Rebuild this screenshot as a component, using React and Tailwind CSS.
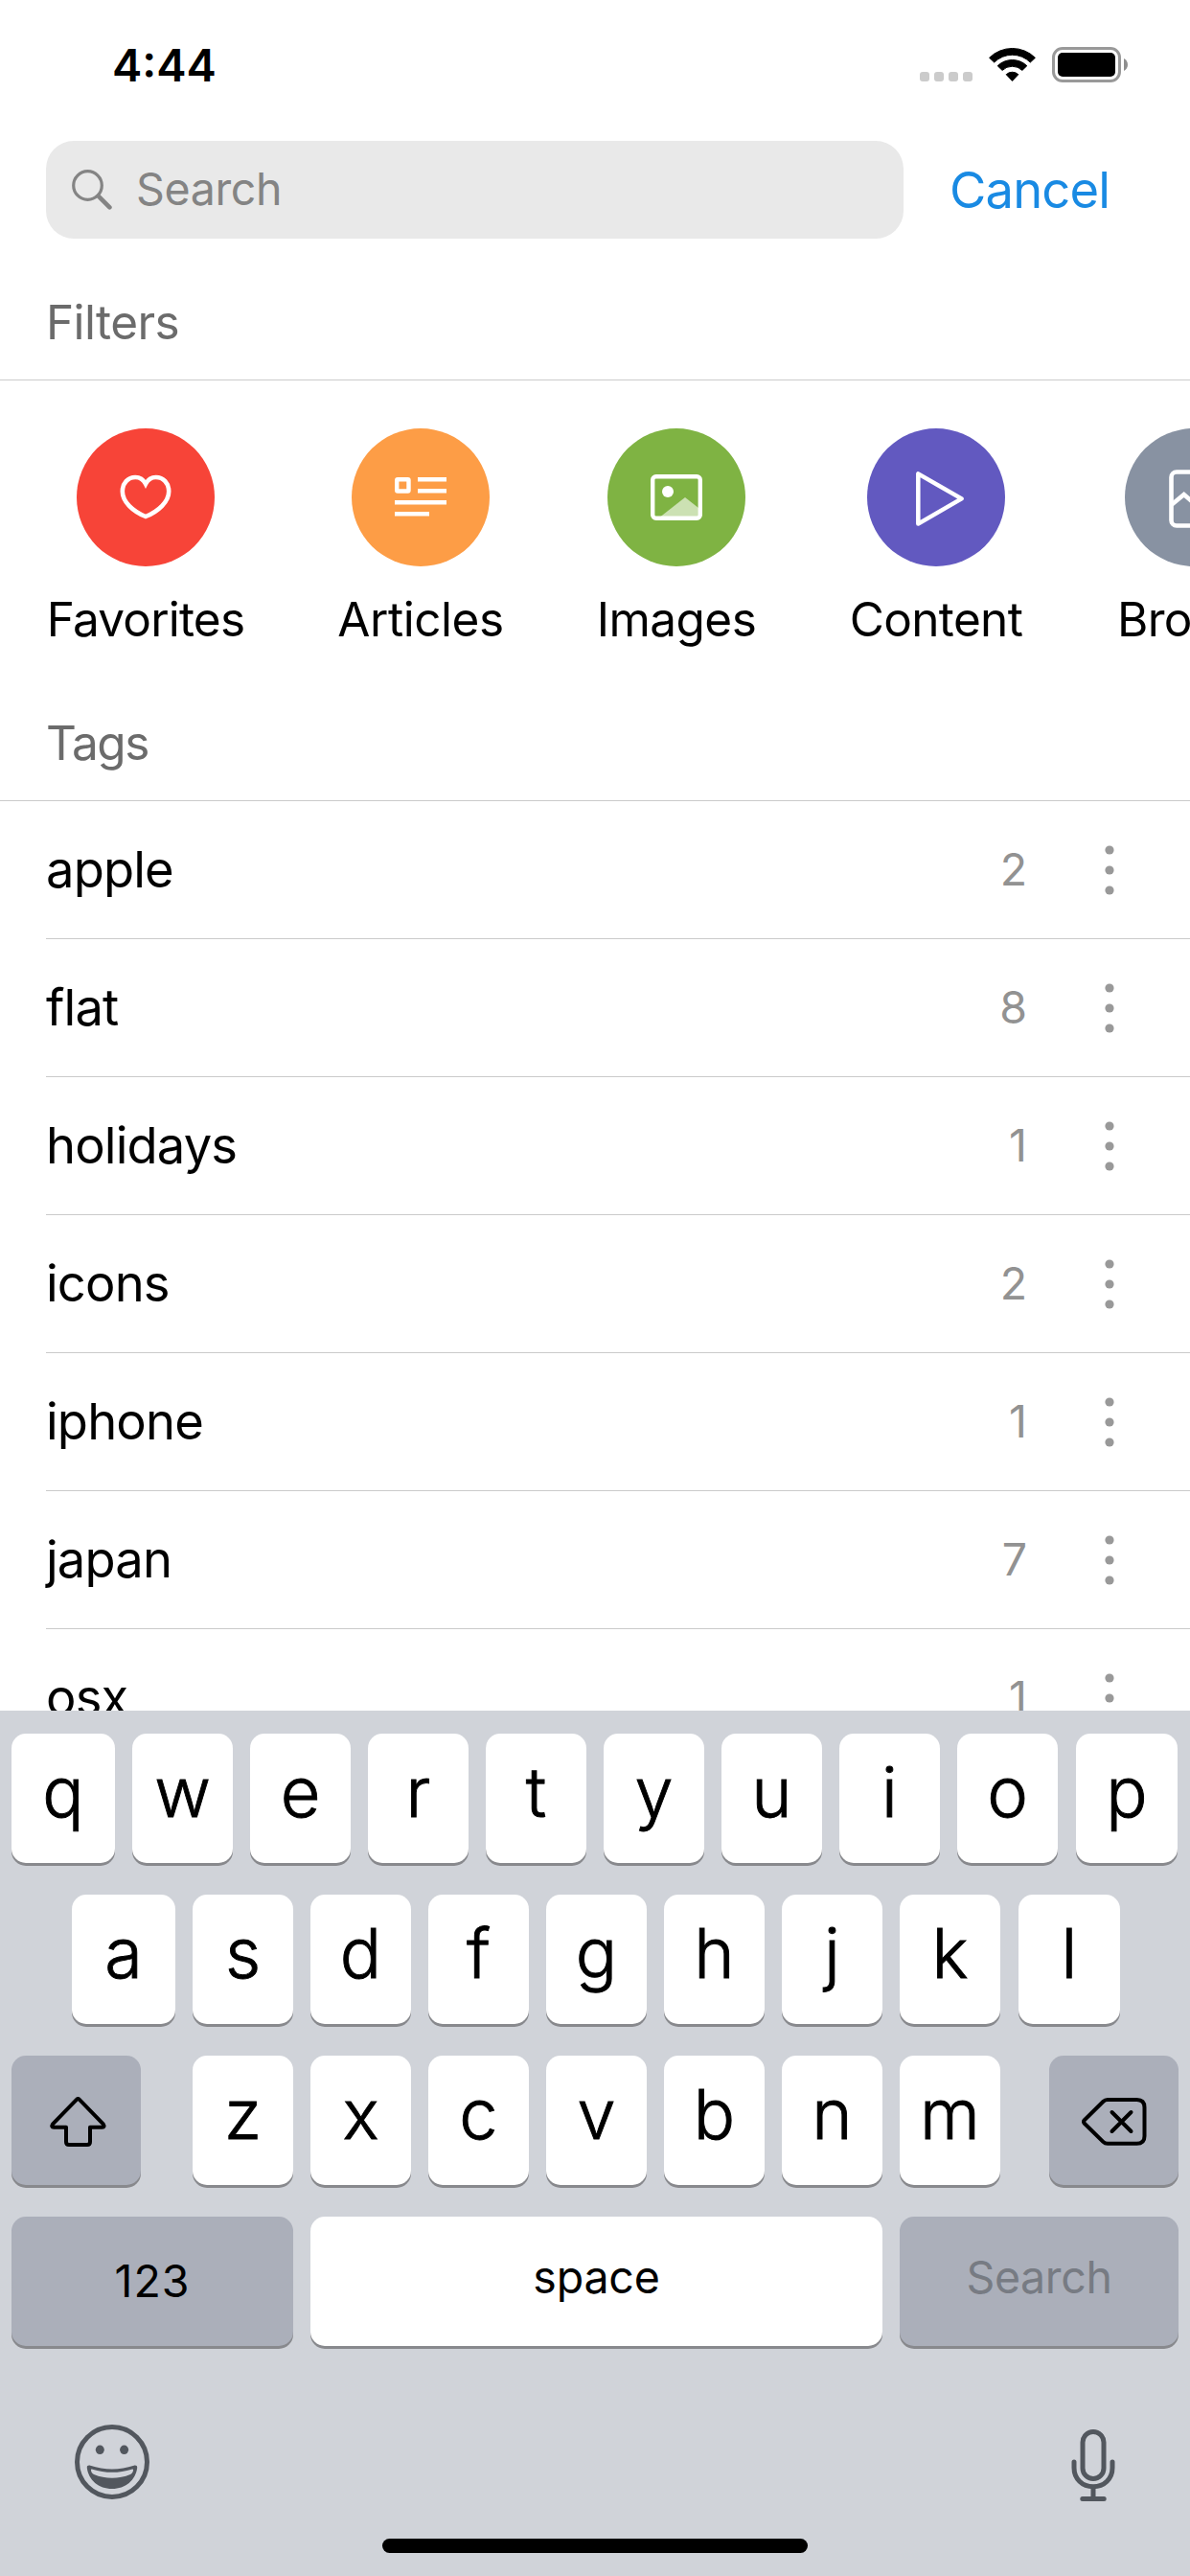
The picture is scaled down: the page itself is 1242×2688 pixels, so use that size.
import React from "react";

const filters = [
  {
    label: "Favorites",
    box: "w-[208px]",
    circle: "bg-[#f74438]",
    text: "tracking-[-0.8px]",
    icon: (
      <path
        d="M72 58C69.8 53.8 66.2 51 61.3 51C53.6 51 47.8 57.2 47.8 65.7C47.8 76.5 58.5 86.4 72 92C85.5 86.4 96.2 76.5 96.2 65.7C96.2 57.2 90.4 51 82.7 51C77.8 51 74.2 53.8 72 58Z"
        strokeWidth="4.6"
        strokeLinejoin="miter"
      />
    ),
  },
  {
    label: "Articles",
    box: "w-[174px]",
    circle: "bg-[#fd9d46]",
    text: "tracking-[-0.45px]",
    icon: (
      <g>
        <rect x="47.2" y="53.2" width="12.3" height="12.3" rx="0.8" strokeWidth="4.4" />
        <path d="M69 53.25H99M69 65.25H99M45 77.25H99M45 89.25H81" strokeWidth="4.5" />
      </g>
    ),
  },
  {
    label: "Images",
    box: "w-[168px]",
    circle: "bg-[#7fb343]",
    text: "tracking-[-0.55px]",
    icon: (
      <g>
        <path d="M55.5 92L81 72L95 83V93H55.5Z" fill="#fff" fillOpacity="0.6" stroke="none" />
        <rect x="47.2" y="50.2" width="49.6" height="43.6" rx="3.5" strokeWidth="4.4" />
        <circle cx="63" cy="66" r="6" fill="#fff" stroke="none" />
      </g>
    ),
  },
  {
    label: "Content",
    box: "w-[182px]",
    circle: "bg-[#6259c0]",
    text: "tracking-[-0.65px]",
    icon: <path d="M53.3 47.4V99.6L98.6 73.4Z" strokeWidth="4.5" strokeLinejoin="round" />,
  },
  {
    label: "Broken",
    box: "w-[164px]",
    circle: "bg-[#8892a2]",
    text: "tracking-[-0.65px]",
    icon: (
      <g strokeWidth="4.6">
        <rect x="48.5" y="45.5" width="47" height="56" rx="5.5" />
        <path d="M49 79.5L61.7 69L72 78L82 69L95 79.5" />
      </g>
    ),
  },
];

const tags = [
  ["apple", 2],
  ["flat", 8],
  ["holidays", 1],
  ["icons", 2],
  ["iphone", 1],
  ["japan", 7],
  ["osx", 1],
];

const keyBase = "h-[135px] rounded-[15px] shadow-[0_3px_0_#88898d] text-center shrink-0";

function LetterKey({ children, className = "w-[105px]" }) {
  return (
    <div
      className={`${keyBase} bg-white text-[72px] leading-[121px] font-light text-black [-webkit-text-stroke:0.9px_#000] ${className}`}
    >
      {children}
    </div>
  );
}

function StatusBar() {
  return (
    <div className="flex h-[147px] items-start pl-[117px] pr-[65px]">
      <div className="mt-[39px] text-[47px] font-semibold leading-[57px]">4:44</div>
      <div className="ml-auto mt-[49px] flex h-[37px]">
        <div className="mr-[17px] flex gap-[5px] pt-[26px]">
          <i className="size-[10px] rounded-[3px] bg-[#cbcbcb]" />
          <i className="size-[10px] rounded-[3px] bg-[#cbcbcb]" />
          <i className="size-[10px] rounded-[3px] bg-[#cbcbcb]" />
          <i className="size-[10px] rounded-[3px] bg-[#cbcbcb]" />
        </div>
        <svg className="mr-[17px] h-[37px] w-[49px]" viewBox="0 0 49 37" stroke="#000" strokeWidth="1" strokeLinejoin="round">
          <path d="M0.6 11.3A34 34 0 0 1 48.4 11.3L43.3 16.1A26.5 26.5 0 0 0 5.7 16.1Z" />
          <path d="M9.2 19.7A22 22 0 0 1 39.8 19.7L34.9 24.4A15 15 0 0 0 14.1 24.4Z" />
          <path d="M18.2 28.7A9.3 9.3 0 0 1 30.8 28.7L24.5 35.4Z" />
        </svg>
        <div className="h-[37px] w-[72px] rounded-[11px] border-[3px] border-[#999] p-[3px]">
          <div className="h-[25px] w-[60px] rounded-[5px] bg-black" />
        </div>
        <svg className="ml-[3px] mt-[12px] h-[13px] w-[4px]" viewBox="0 0 4 13">
          <path d="M0 0C5.3 2.4 5.3 10.6 0 13Z" fill="#8e8e8e" />
        </svg>
      </div>
    </div>
  );
}

function SectionTitle({ children, className = "" }) {
  return (
    <div className={`border-b border-[#cbcbcb] pl-[48px] text-[49.5px] leading-[120px] text-[#6b6b6b] ${className}`}>
      {children}
    </div>
  );
}

function Keyboard() {
  return (
    <div className="flex h-[903px] flex-col bg-[#d0d3d9] pt-[24px]">
      <div className="flex gap-[18px] pl-[12px]">
        <LetterKey className="w-[108px]">q</LetterKey>
        {"wertyuio".split("").map((k) => (
          <LetterKey key={k}>{k}</LetterKey>
        ))}
        <LetterKey className="ml-px w-[106px]">p</LetterKey>
      </div>
      <div className="mt-[33px] flex gap-[18px] pl-[75px]">
        <LetterKey className="w-[108px]">a</LetterKey>
        {"sdfghjk".split("").map((k) => (
          <LetterKey key={k}>{k}</LetterKey>
        ))}
        <LetterKey className="ml-px w-[106px]">l</LetterKey>
      </div>
      <div className="mt-[33px] flex justify-between px-[12px]">
        <div className={`${keyBase} w-[135px] bg-[#abafba]`}>
          <svg className="size-[135px]" viewBox="0 0 135 135" fill="none" stroke="#000" strokeWidth="4" strokeLinejoin="round">
            <path d="M67.9 45.9Q69.4 44.4 70.9 45.9L95.7 71.3Q97.8 74.7 94.6 74.7H82V90Q82 93 79 93H60Q57 93 57 90V74.7H44.2Q41 74.7 43.1 71.3Z" />
          </svg>
        </div>
        <div className="ml-[3px] flex gap-[18px]">
          {"zxcvbnm".split("").map((k) => (
            <LetterKey key={k}>{k}</LetterKey>
          ))}
        </div>
        <div className={`${keyBase} w-[135px] bg-[#abafba]`}>
          <svg className="size-[135px]" viewBox="0 0 135 135" fill="none" stroke="#000" strokeWidth="4" strokeLinejoin="round" strokeLinecap="round">
            <path d="M61 46H91.5Q99.5 46 99.5 54V84Q99.5 91.8 91.5 91.8H61Q58.3 91.8 56.3 89.8L36.8 70.8Q35.2 69 36.8 67.2L56.3 48Q58.3 46 61 46Z" />
            <path d="M65.5 59L85.5 79M85.5 59L65.5 79" />
          </svg>
        </div>
      </div>
      <div className="mt-[33px] flex gap-[18px] pl-[12px] text-[46.5px]">
        <div className={`${keyBase} w-[294px] bg-[#abafba] leading-[134px] tracking-[1px]`}>123</div>
        <div className={`${keyBase} w-[597px] bg-white leading-[126px] tracking-[-0.2px]`}>space</div>
        <div className={`${keyBase} w-[291px] bg-[#abafba] leading-[126px] tracking-[-0.35px] text-[#777b83]`}>Search</div>
      </div>
      <div className="flex items-start justify-between pl-[78px] pr-[78px] pt-[82px]">
        <svg className="size-[78px]" viewBox="0 0 78 78">
          <circle cx="39" cy="39" r="36.5" fill="none" stroke="#52575e" strokeWidth="5" />
          <ellipse cx="26.3" cy="26.3" rx="4.5" ry="4.8" fill="#52575e" />
          <ellipse cx="51.6" cy="26.3" rx="4.5" ry="4.8" fill="#52575e" />
          <path
            d="M12.8 45C12.6 43 14.3 42.2 16.2 42.8C31 47.6 47 47.6 61.8 42.8C63.7 42.2 65.4 43 65.2 45C63.6 58 53 67 39 67C25 67 14.4 58 12.8 45Z"
            fill="#52575e"
          />
          <path
            d="M17 47.8C16.8 46.6 17.6 46.3 18.6 46.7C31.5 50.8 46.5 50.8 59.4 46.7C60.4 46.3 61.2 46.6 61 47.8C60.7 49.8 59.8 51.2 58 52C46 57 32 57 20 52C18.2 51.2 17.3 49.8 17 47.8Z"
            fill="#d0d3d9"
          />
        </svg>
        <svg className="mt-[5px] h-[75px] w-[46px]" viewBox="0 0 46 75" fill="none" stroke="#52575e" strokeWidth="5" strokeLinecap="round">
          <rect x="12" y="2.5" width="22" height="49" rx="11" />
          <path d="M3 34V40C3 51.5 11.5 59.7 23 59.7C34.5 59.7 43 51.5 43 40V34M23 60V72M11.8 72.5H34.2" />
        </svg>
      </div>
      <div className="mx-auto mb-[24px] mt-auto h-[15px] w-[444px] rounded-[8px] bg-black" />
    </div>
  );
}

export default function App() {
  return (
    <div className="flex h-[2688px] w-[1242px] flex-col overflow-hidden bg-white font-['Inter',sans-serif] text-black">
      <StatusBar />

      <div className="flex h-[102px] items-center pl-[48px]">
        <div className="flex h-[102px] w-[895px] items-center rounded-[29px] bg-[#e9e9e9] pl-[27px] text-[46.5px] leading-[56px] tracking-[-0.35px] text-[#848484]">
          <svg className="h-[42px] w-[42px]" viewBox="0 0 42 42" fill="none" stroke="#848484" strokeLinecap="round">
            <circle cx="16.5" cy="16.5" r="14.8" strokeWidth="3.2" />
            <path d="M28.2 28.2L39.4 39.4" strokeWidth="4.6" />
          </svg>
          <span className="-mt-[2px] ml-[25px]">Search</span>
        </div>
        <span className="ml-[48px] text-[52.5px] leading-[64px] tracking-[-0.85px] text-[#198ae3]">Cancel</span>
      </div>

      <SectionTitle className="pt-[27px] tracking-[-0.6px]">Filters</SectionTitle>
      <div className="mt-[50px] flex gap-[96px] pl-[48px]">
        {filters.map((f) => (
          <div key={f.label} className={`flex shrink-0 flex-col items-center ${f.box}`}>
            <div className={`size-[144px] rounded-full ${f.circle}`}>
              <svg className="size-[144px]" viewBox="0 0 144 144" fill="none" stroke="#fff">
                {f.icon}
              </svg>
            </div>
            <div className={`mt-[25px] whitespace-nowrap text-[49.5px] leading-[60px] ${f.text}`}>{f.label}</div>
          </div>
        ))}
      </div>

      <SectionTitle className="mt-[39px] tracking-[-1.4px]">Tags</SectionTitle>
      <div className="h-[949px] overflow-hidden pl-[48px]">
        {tags.map(([name, count]) => (
          <div key={name} className="flex h-[144px] items-start border-b border-[#cbcbcb] pr-[79px] leading-[142px]">
            <span className="text-[52.5px] tracking-[-0.85px]">{name}</span>
            <span className="ml-auto text-[46.5px] text-[#929292]">{count}</span>
            <svg className="ml-[81px] mt-[46px] h-[52px] w-[10px]" viewBox="0 0 10 52" fill="#999">
              <circle cx="5" cy="5" r="4.6" />
              <circle cx="5" cy="26" r="4.6" />
              <circle cx="5" cy="47" r="4.6" />
            </svg>
          </div>
        ))}
      </div>

      <Keyboard />
    </div>
  );
}
